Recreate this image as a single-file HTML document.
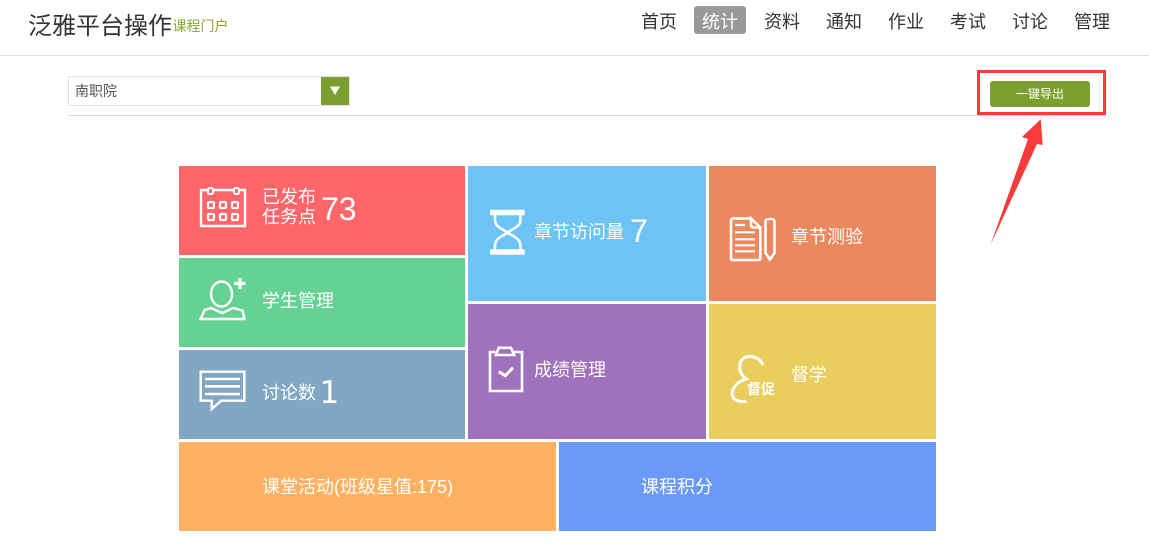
<!DOCTYPE html>
<html lang="zh">
<head>
<meta charset="utf-8">
<title>统计</title>
<style>
html,body{margin:0;padding:0;background:#fff}
body{width:1149px;height:543px;position:relative;overflow:hidden;font-family:"Liberation Sans","Microsoft YaHei","Noto Sans CJK SC",sans-serif;color:#fff}
.a{position:absolute;white-space:nowrap}
.t{position:absolute}
.l{position:absolute;font-size:18px;line-height:20px;white-space:nowrap;color:#fff}
.n{position:absolute;font-size:32px;line-height:40px;color:#fff;white-space:nowrap}
.nav{position:absolute;top:9px;font-size:18px;line-height:26px;color:#333;white-space:nowrap}
svg{position:absolute;overflow:visible}
</style>
</head>
<body>
<div class="a" style="left:28px;top:12px;font-size:24px;line-height:30px;color:#333">泛雅平台操作</div>
<div class="a" style="left:172.500px;top:17px;font-size:14px;line-height:18px;color:#8aa82e">课程门户</div>
<div class="a" style="left:0;top:55px;width:1149px;height:1px;background:#e3e3e3"></div>

<div class="nav" style="left:641px">首页</div>
<div class="a" style="left:694px;top:6px;width:52px;height:28px;background:#999;border-radius:3px"></div>
<div class="nav" style="left:702px;color:#fff">统计</div>
<div class="nav" style="left:764px">资料</div>
<div class="nav" style="left:826px">通知</div>
<div class="nav" style="left:888px">作业</div>
<div class="nav" style="left:950px">考试</div>
<div class="nav" style="left:1012px">讨论</div>
<div class="nav" style="left:1074px">管理</div>

<div class="a" style="left:68px;top:76px;width:280px;height:28px;border:1px solid #e2e2e2;background:#fff"></div>
<div class="a" style="left:75px;top:82px;font-size:14px;line-height:18px;color:#555">南职院</div>
<div class="a" style="left:321px;top:77px;width:28px;height:28px;background:#7d9f2f"></div>
<svg style="left:321px;top:77px" width="28" height="28"><path d="M9 9.500H19L14 18Z" fill="#fff"/></svg>
<div class="a" style="left:68px;top:115px;width:1037px;height:1px;background:#dcdcdc"></div>

<div class="a" style="left:990px;top:81px;width:100px;height:26px;background:#7d9f2f;border-radius:3px;font-size:12px;line-height:27px;text-align:center;color:#fff">一键导出</div>
<div class="a" style="left:977px;top:70px;width:123px;height:39px;border:3px solid #f93a3a"></div>
<svg style="left:0;top:0" width="1149" height="543"><path d="M990.700 244.500L1028 139 1022 137 1040.700 119.300 1042.700 145 1037 144Z" fill="#f93a3a"/></svg>

<div class="t" style="left:179px;top:166px;width:286px;height:89px;background:#fe6669"></div>
<div class="t" style="left:179px;top:258px;width:286px;height:89px;background:#65d293"></div>
<div class="t" style="left:179px;top:350px;width:286px;height:89px;background:#81a7c3"></div>
<div class="t" style="left:468px;top:166px;width:238px;height:135px;background:#6ec3f5"></div>
<div class="t" style="left:709px;top:166px;width:227px;height:135px;background:#eb885f"></div>
<div class="t" style="left:468px;top:304px;width:238px;height:135px;background:#a071bc"></div>
<div class="t" style="left:709px;top:304px;width:227px;height:135px;background:#e9ce5e"></div>
<div class="t" style="left:179px;top:442px;width:377px;height:89px;background:#feb162"></div>
<div class="t" style="left:559px;top:442px;width:377px;height:89px;background:#6a99f8"></div>

<svg style="left:0;top:0" width="1149" height="543" fill="none" stroke="#fff" stroke-width="2">
<!-- calendar -->
<path d="M207 190H201V226H245V190H239M214 190H233" stroke-width="2.400"/>
<rect x="208" y="188" width="5" height="6" rx="1.500" stroke-width="2"/>
<rect x="234" y="188" width="5" height="6" rx="1.500" stroke-width="2"/>
<rect x="208" y="202" width="6" height="6" rx="1" stroke-width="2.200"/><rect x="220" y="202" width="6" height="6" rx="1" stroke-width="2.200"/><rect x="232" y="202" width="6" height="6" rx="1" stroke-width="2.200"/>
<rect x="208" y="214" width="6" height="6" rx="1" stroke-width="2.200"/><rect x="220" y="214" width="6" height="6" rx="1" stroke-width="2.200"/><rect x="232" y="214" width="6" height="6" rx="1" stroke-width="2.200"/>
<!-- person -->
<ellipse cx="221.500" cy="294" rx="10.500" ry="12.500" stroke-width="2.400"/>
<path d="M200.500 319H244.500L242.500 310.500 233 308 222.300 313 211 308 204.700 310Z" stroke-width="2.400"/>
<path d="M240 278V289M234 283.500H245.500" stroke-width="3.200"/>
<!-- comment -->
<path d="M200.700 371.700H244.300V400.700H221.300L211.700 409V400.700H200.700Z" stroke-width="2.400"/>
<path d="M205 379H240M205 386.300H240M205 394H240" stroke-width="2.600"/>
<!-- hourglass -->
<path d="M490 212.500H524.700M490 252H524.700" stroke-width="5.500"/>
<path d="M495 215V220C495 227 503 229 507.500 232.500C503 236 495 238 495 246V250M520.500 215V220C520.500 227 512 229 507.500 232.500C512 236 520.500 238 520.500 246V250" stroke-width="2.600"/>
<!-- document -->
<path d="M751 218.500H733Q731 218.500 731 220.500V258Q731 260 733 260H758Q760.300 260 760.300 258V227.500L751 218.500V225Q751 227.500 753.500 227.500H760.300" stroke-width="2.600"/>
<path d="M735 225H745M735 232.300H755M735 239.300H755M735 245.300H755M735 251.300H755" stroke-width="2.200"/>
<path d="M765.500 221Q765.500 219 770 219Q774.500 219 774.500 221V253L770 259.500 765.500 253Z" stroke-width="2.600"/>
<!-- clipboard -->
<path d="M495.500 352H490V391H522V352H514" stroke-width="2.600"/>
<path d="M496 355L498.700 347.800H511L514 355Z" stroke-width="2.600"/>
<path d="M498.700 371.700L505.300 375.700 513 367.700" stroke-width="3"/>
<!-- supervise -->
<path d="M763 365C760 358 752 355 746 357C738 360 737 372 746.300 379C735 382 730 392 733 397C735 401 741 402 746.500 401.500" stroke-width="3"/>
</svg>
<div class="a" style="left:747px;top:381px;font-size:14px;line-height:16px;font-weight:bold;color:#fff">督促</div>

<div class="l" style="left:262px;top:187px">已发布</div>
<div class="l" style="left:262px;top:207px">任务点</div>
<div class="n" style="left:321px;top:188.500px">73</div>
<div class="l" style="left:262px;top:291px">学生管理</div>
<div class="l" style="left:262px;top:383px">讨论数</div>
<div class="n" style="left:319.500px;top:372.500px;font-size:31px;font-family:'DejaVu Sans',sans-serif">1</div>
<div class="l" style="left:534px;top:222px">章节访问量</div>
<div class="n" style="left:630px;top:211px">7</div>
<div class="l" style="left:791px;top:227px">章节测验</div>
<div class="l" style="left:534px;top:360px">成绩管理</div>
<div class="l" style="left:791px;top:365px">督学</div>
<div class="l" style="left:262px;top:477px">课堂活动(班级星值:175)</div>
<div class="l" style="left:641px;top:477px">课程积分</div>
</body>
</html>
